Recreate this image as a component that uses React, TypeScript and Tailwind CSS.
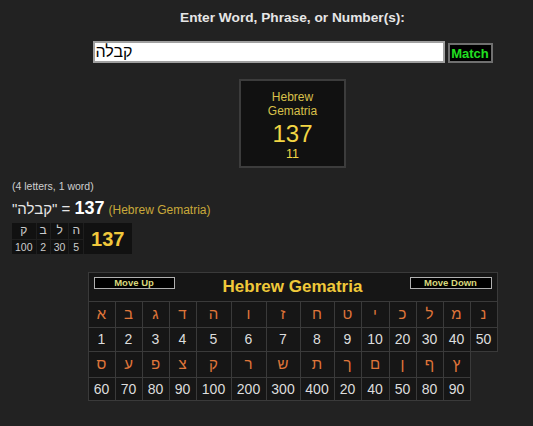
import React from "react";

const ROW1 = [
  ["א", 1], ["ב", 2], ["ג", 3], ["ד", 4], ["ה", 5], ["ו", 6], ["ז", 7],
  ["ח", 8], ["ט", 9], ["י", 10], ["כ", 20], ["ל", 30], ["מ", 40], ["נ", 50],
];

const ROW2 = [
  ["ס", 60], ["ע", 70], ["פ", 80], ["צ", 90], ["ק", 100], ["ר", 200], ["ש", 300],
  ["ת", 400], ["ך", 20], ["ם", 40], ["ן", 50], ["ף", 80], ["ץ", 90],
];

const BREAKDOWN = [["ק", 100], ["ב", 2], ["ל", 30], ["ה", 5]];

const COLS = [
  "w-[27px]", "w-[27px]", "w-[27px]", "w-[27px]", "w-[35px]", "w-[35px]", "w-[34px]",
  "w-[34px]", "w-[27px]", "w-[28px]", "w-[27px]", "w-[27px]", "w-[27px]", "w-[27px]",
];

const cell = "border border-[#3a3a3a] bg-[#161616] text-center p-0";

const App: React.FC = () => {
  return (
    <div className="min-h-screen bg-[#222222] font-['Liberation_Sans',Arial,sans-serif] text-[#dddddd]">
      {/* top: query form and result box */}
      <div className="pl-[52px] pt-[9px] flex flex-col items-center">
        <div className="text-[13.7px] font-bold leading-[17px] text-[#e6e6e6]">
          Enter Word, Phrase, or Number(s):
        </div>
        <div className="mt-[15px] flex items-end gap-[3px]">
          <input
            defaultValue="קבלה"
            className="w-[352px] h-[22px] bg-white border-2 border-[#a0a0a0] px-[1px] text-[16px] text-black outline-none font-['Liberation_Sans',Arial,sans-serif]"
          />
          <button className="h-[20px] w-[45px] bg-black border-2 border-[#707070] text-[13px] font-bold leading-none text-[#22e022]">
            Match
          </button>
        </div>
        <div className="mt-[16px] w-[107px] h-[89px] border-2 border-[#3c3c3c] bg-[#111111] flex flex-col items-center pt-[9px]">
          <div className="text-[12px] leading-[14px] text-[#d9c04a] text-center">
            Hebrew
            <br />
            Gematria
          </div>
          <div className="mt-[3px] text-[24px] leading-[26px] text-[#f2d544]">137</div>
          <div className="text-[12.5px] leading-[14px] text-[#f2d544]">11</div>
        </div>
      </div>

      {/* summary */}
      <div className="pl-3 mt-[12px]">
        <div className="text-[10.5px] leading-[13px] text-[#cfcfcf]">(4 letters, 1 word)</div>
        <div className="mt-[5px] flex items-baseline leading-[20px]">
          <span className="text-[15px] text-[#e6e6e6]">"קבלה" =&nbsp;</span>
          <span className="text-[18px] font-bold text-white">137</span>
          <span className="ml-[4px] text-[12px] text-[#c9a93a]">(Hebrew Gematria)</span>
        </div>
        <table className="mt-[3px] border-collapse bg-[#111111]">
          <tbody>
            <tr className="h-[16px]">
              {BREAKDOWN.map(([l], i) => (
                <td key={i} className="border-r border-b border-[#1e1e1e] px-[3px] text-center text-[12px] leading-[15px] text-[#cccccc]">
                  {l}
                </td>
              ))}
              <td rowSpan={2} className="w-[48px] text-center text-[20px] font-bold text-[#f0c83c]">137</td>
            </tr>
            <tr className="h-[15px]">
              {BREAKDOWN.map(([, v], i) => (
                <td key={i} className="border-r border-[#1e1e1e] px-[3px] text-center text-[10.5px] leading-[14px] text-[#cccccc]">
                  {v}
                </td>
              ))}
            </tr>
          </tbody>
        </table>
      </div>

      {/* letter chart */}
      <div className="pl-[52px] mt-[18px] flex justify-center">
        <table className="table-fixed border-collapse">
          <colgroup>
            {COLS.map((w, i) => (
              <col key={i} className={w} />
            ))}
          </colgroup>
          <tbody>
            <tr>
              <td colSpan={14} className={`${cell} h-[28px] align-top`}>
                <div className="grid grid-cols-[1fr_auto_1fr] px-[5px]">
                  <div className="pt-[4px] flex justify-start">
                    <button className="w-[81px] h-[12px] bg-black border border-[#b0b0b0] text-[9.5px] font-bold leading-none text-[#d8d87c]">
                      Move Up
                    </button>
                  </div>
                  <div className="text-[17px] font-bold leading-[28px] text-[#f0c93a]">Hebrew Gematria</div>
                  <div className="pt-[4px] flex justify-end">
                    <button className="w-[82px] h-[12px] bg-black border border-[#b0b0b0] text-[9.5px] font-bold leading-none text-[#d8d87c]">
                      Move Down
                    </button>
                  </div>
                </div>
              </td>
            </tr>
            <tr>
              {ROW1.map(([l], i) => (
                <td key={i} className={`${cell} h-[26px] text-[15px] text-[#e0763a]`}>{l}</td>
              ))}
            </tr>
            <tr>
              {ROW1.map(([, v], i) => (
                <td key={i} className={`${cell} h-[24px] text-[14px] text-[#dddddd]`}>{v}</td>
              ))}
            </tr>
            <tr>
              {ROW2.map(([l], i) => (
                <td key={i} className={`${cell} h-[26px] text-[15px] text-[#e0763a]`}>{l}</td>
              ))}
            </tr>
            <tr>
              {ROW2.map(([, v], i) => (
                <td key={i} className={`${cell} h-[23px] text-[14px] text-[#dddddd]`}>{v}</td>
              ))}
            </tr>
          </tbody>
        </table>
      </div>
    </div>
  );
};

export default App;
